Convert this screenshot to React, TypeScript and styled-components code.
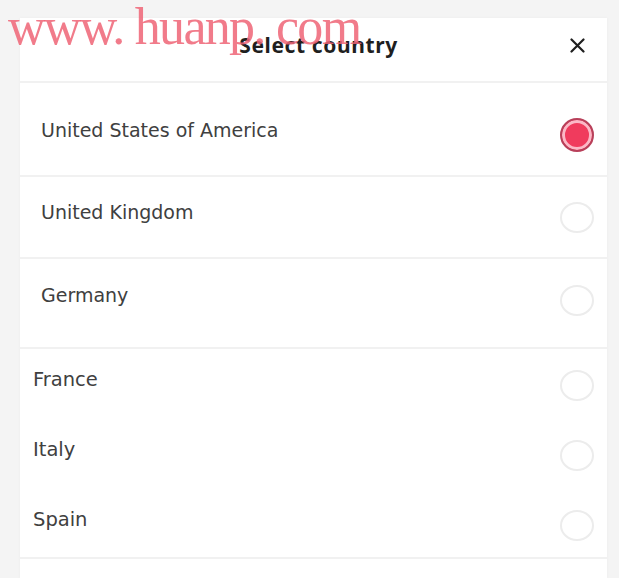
import React from 'react';
import styled, { createGlobalStyle } from 'styled-components';

const GlobalStyle = createGlobalStyle`
  html, body {
    margin: 0;
    padding: 0;
    background: #f4f4f4;
    font-family: "DejaVu Sans", "Liberation Sans", sans-serif;
  }
`;

const Page = styled.div`
  position: relative;
  width: 619px;
  height: 578px;
  overflow: hidden;
  background: #f4f4f4;
  padding: 18px 12px 0 20px;
  box-sizing: border-box;
`;

const Sheet = styled.div`
  background: #ffffff;
  height: 100%;
  display: flex;
  flex-direction: column;
  box-shadow: 0 0 3px rgba(0, 0, 0, 0.04);
`;

const Header = styled.div`
  height: 65px;
  box-sizing: border-box;
  display: flex;
  align-items: center;
  justify-content: center;
  position: relative;
  padding-bottom: 9px;
  border-bottom: 2px solid #f1f1f1;
`;

const Title = styled.h2`
  margin: 0 0 0 10px;
  font-family: "Noto Sans", "Liberation Sans", sans-serif;
  font-size: 21px;
  font-weight: 700;
  color: #1f1f1f;
  letter-spacing: 0.6px;
`;

const CloseButton = styled.button`
  position: absolute;
  right: 20px;
  top: 17px;
  width: 20px;
  height: 20px;
  padding: 0;
  border: none;
  background: none;
  display: flex;
  align-items: center;
  justify-content: center;
`;

const Row = styled.div<{ $height: number; $indent: number; $pad: number; $divider: boolean }>`
  height: ${(p) => p.$height}px;
  box-sizing: border-box;
  display: flex;
  align-items: flex-start;
  justify-content: space-between;
  padding: ${(p) => p.$pad}px 13px 0 ${(p) => p.$indent}px;
  border-bottom: ${(p) => (p.$divider ? '2px solid #f1f1f1' : 'none')};
`;

const Name = styled.span<{ $size: number }>`
  font-size: ${(p) => p.$size}px;
  line-height: 24px;
  color: #404040;
`;

const Radio = styled.span<{ $checked: boolean }>`
  width: 34px;
  height: ${(p) => (p.$checked ? 34 : 31)}px;
  margin-top: ${(p) => (p.$checked ? 0 : 2)}px;
  box-sizing: border-box;
  border-radius: 50%;
  flex-shrink: 0;
  border: ${(p) => (p.$checked ? '2px solid #b8405a' : '2px solid #ececec')};
  background: ${(p) => (p.$checked ? '#f03b5d' : '#ffffff')};
  box-shadow: ${(p) => (p.$checked ? 'inset 0 0 0 3px #fbb8c6' : 'none')};
`;

const Watermark = styled.div`
  position: absolute;
  left: 8px;
  top: -3px;
  font-family: "Liberation Serif", "Times New Roman", serif;
  font-size: 52px;
  letter-spacing: -1.7px;
  color: rgba(238, 100, 118, 0.85);
  white-space: pre;
  pointer-events: none;
`;

type Country = { name: string; height: number; indent: number; pad: number; size: number; divider: boolean };

const countries: Country[] = [
  { name: 'United States of America', height: 94, indent: 21, pad: 35, size: 19, divider: true },
  { name: 'United Kingdom', height: 82, indent: 21, pad: 23, size: 19, divider: true },
  { name: 'Germany', height: 90, indent: 21, pad: 24, size: 19, divider: true },
  { name: 'France', height: 70, indent: 13, pad: 19, size: 19.5, divider: false },
  { name: 'Italy', height: 70, indent: 13, pad: 19, size: 19.5, divider: false },
  { name: 'Spain', height: 70, indent: 13, pad: 19, size: 19.5, divider: true },
];

export default function App() {
  const selected = 'United States of America';
  return (
    <>
      <GlobalStyle />
      <Page>
        <Sheet>
          <Header>
            <Title>Select country</Title>
            <CloseButton aria-label="Close">
              <svg width="15" height="15" viewBox="0 0 15 15">
                <path d="M1.5 1.5 L13.5 13.5 M13.5 1.5 L1.5 13.5" stroke="#1f1f1f" strokeWidth="2.2" strokeLinecap="round" />
              </svg>
            </CloseButton>
          </Header>
          {countries.map((c) => (
            <Row key={c.name} $height={c.height} $indent={c.indent} $pad={c.pad} $divider={c.divider}>
              <Name $size={c.size}>{c.name}</Name>
              <Radio $checked={c.name === selected} />
            </Row>
          ))}
        </Sheet>
        <Watermark>www. huanp. com</Watermark>
      </Page>
    </>
  );
}
